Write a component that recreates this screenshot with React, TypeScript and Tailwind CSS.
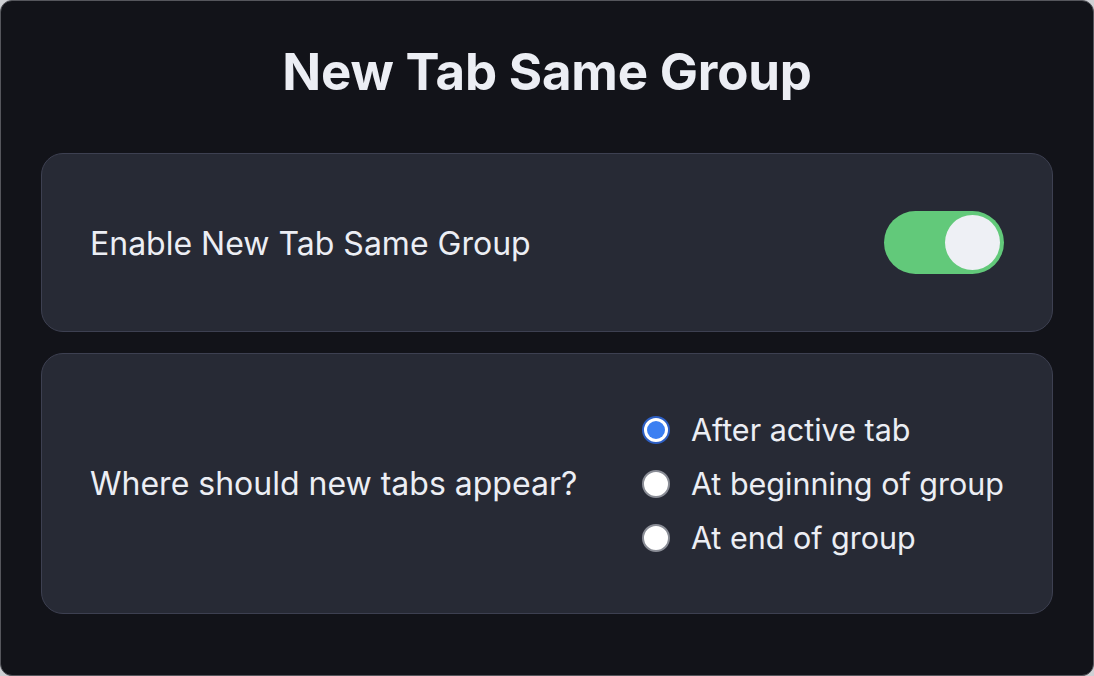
import { useState } from 'react'

const options = ['After active tab', 'At beginning of group', 'At end of group']

function Toggle({ on, onChange }: { on: boolean; onChange: (v: boolean) => void }) {
  return (
    <button
      onClick={() => onChange(!on)}
      className={`flex h-[63px] w-[120px] items-center rounded-full px-[4px] transition-colors ${
        on ? 'justify-end bg-[#62c97a]' : 'justify-start bg-[#4b4f5e]'
      }`}
    >
      <span className="block h-[55px] w-[55px] rounded-full bg-[#eef0f5]" />
    </button>
  )
}

function Radio({ checked }: { checked: boolean }) {
  return checked ? (
    <span className="flex h-[28px] w-[28px] items-center justify-center rounded-full border-[2px] border-[#2d5fc4] bg-white">
      <span className="block h-[18px] w-[18px] rounded-full bg-[#3b7ff2]" />
    </span>
  ) : (
    <span className="block h-[28px] w-[28px] rounded-full border-[2px] border-[#8a8d96] bg-white" />
  )
}

export default function App() {
  const [enabled, setEnabled] = useState(true)
  const [position, setPosition] = useState(0)

  return (
    <div className="h-[676px] w-[1094px] bg-[#cfd0d4] font-['Inter',sans-serif]">
      <div className="flex h-full w-full flex-col rounded-[12px] border border-[#55565c] bg-[#121319] px-[40px] text-[#eceef4]">
        <h1 className="pt-[37px] pb-[47px] text-center text-[51px] leading-[68px] font-bold tracking-[-0.2px]">
          New Tab Same Group
        </h1>

        <section className="flex h-[179px] items-center justify-between rounded-[22px] border border-[#3d4051] bg-[#272a35] pr-[48px] pl-[48px]">
          <span className="pt-[2px] text-[32px]">Enable New Tab Same Group</span>
          <Toggle on={enabled} onChange={setEnabled} />
        </section>

        <section className="mt-[21px] flex h-[261px] items-center justify-between rounded-[22px] border border-[#3d4051] bg-[#272a35] pr-[48px] pl-[48px]">
          <span className="text-[32px]">Where should new tabs appear?</span>
          <div className="flex flex-col gap-[14px]">
            {options.map((label, i) => (
              <label
                key={label}
                onClick={() => setPosition(i)}
                className="flex h-[40px] cursor-pointer items-center gap-[21px] text-[30.5px]"
              >
                <Radio checked={position === i} />
                {label}
              </label>
            ))}
          </div>
        </section>
      </div>
    </div>
  )
}
